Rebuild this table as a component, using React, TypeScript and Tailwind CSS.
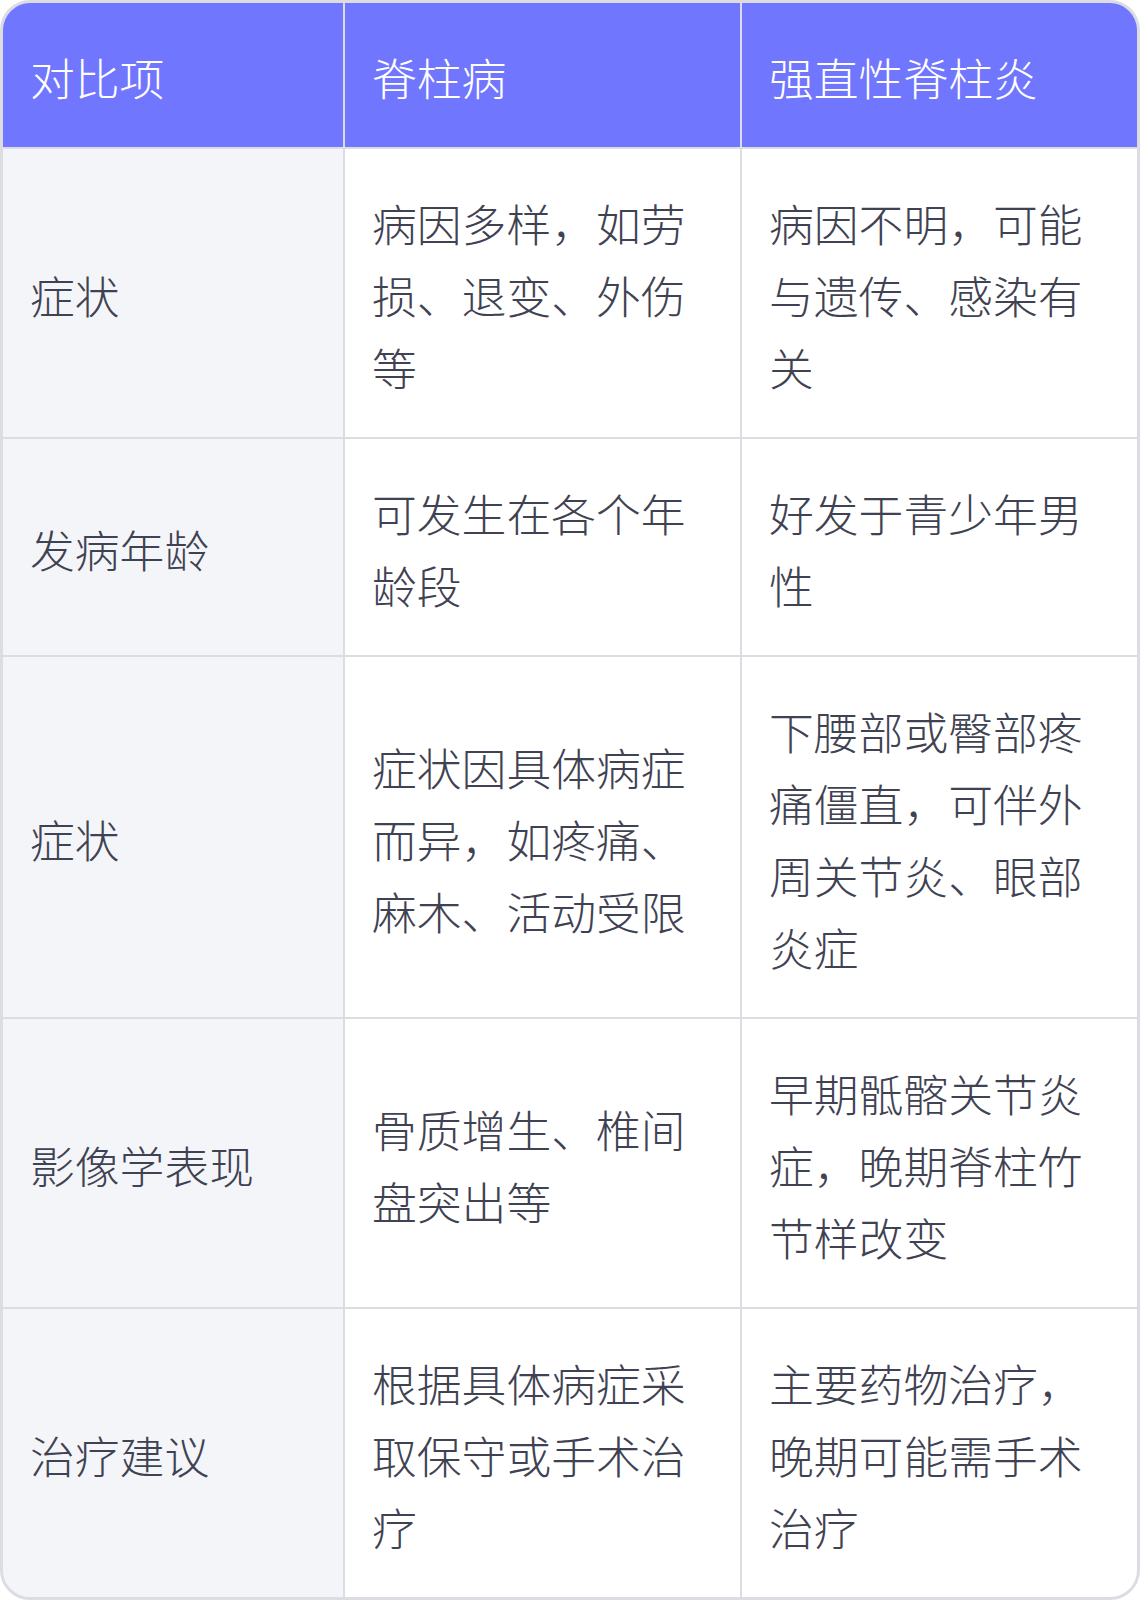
// App.tsx — 脊柱病 vs 强直性脊柱炎 comparison table

const HEAD = ['对比项', '脊柱病', '强直性脊柱炎']

const ROWS: [string, string, string][] = [
  ['症状', '病因多样，如劳损、退变、外伤等', '病因不明，可能与遗传、感染有关'],
  ['发病年龄', '可发生在各个年龄段', '好发于青少年男性'],
  ['症状', '症状因具体病症而异，如疼痛、麻木、活动受限', '下腰部或臀部疼痛僵直，可伴外周关节炎、眼部炎症'],
  ['影像学表现', '骨质增生、椎间盘突出等', '早期骶髂关节炎症，晚期脊柱竹节样改变'],
  ['治疗建议', '根据具体病症采取保守或手术治疗', '主要药物治疗，晚期可能需手术治疗'],
]

export default function App() {
  return (
    <div className="w-[1140px] bg-white font-['Noto_Sans_CJK_SC','Noto_Sans',sans-serif] font-light">
      <div className="overflow-hidden rounded-[30px] border-[3px] border-[#dcdde3]">
        <div className="grid grid-cols-[340px_395px_395px] gap-[2px] bg-[#dcdde3] text-[44.8px] leading-[72px]">
          {HEAD.map(h => (
            <div key={h} className="flex items-center bg-[#7176ff] pl-[27px] pr-[28px] pt-[38px] pb-[34px] text-white">
              {h}
            </div>
          ))}

          {ROWS.map((row, i) => (
            <div key={i} className="contents">
              <div className="flex items-center bg-[#f4f5f9] pl-[27px] pr-[28px] pt-[38px] pb-[34px] text-[#3f4252]">
                {row[0]}
              </div>
              <div className="flex items-center bg-white pl-[27px] pr-[28px] pt-[38px] pb-[34px] text-[#3f4252]">
                <span>{row[1]}</span>
              </div>
              <div className="flex items-center bg-white pl-[27px] pr-[28px] pt-[38px] pb-[34px] text-[#3f4252]">
                <span>{row[2]}</span>
              </div>
            </div>
          ))}
        </div>
      </div>
    </div>
  )
}
